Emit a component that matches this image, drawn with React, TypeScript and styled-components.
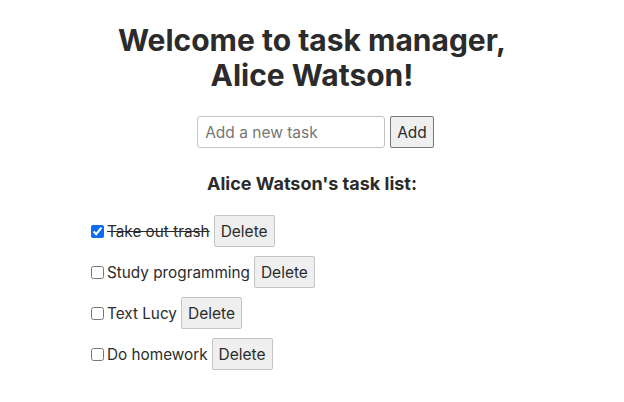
import React, { useState } from 'react';
import styled, { createGlobalStyle } from 'styled-components';

const GlobalStyle = createGlobalStyle`
  body {
    margin: 0;
    background: #ffffff;
    color: #2b2b2b;
    font-family: Inter, "Noto Sans", "Liberation Sans", sans-serif;
  }
`;

const Page = styled.div`
  width: 442px;
  margin: 0 auto;
  padding-top: 23px;
`;

const Title = styled.h1`
  margin: 0 0 23px;
  text-align: center;
  font-size: 30px;
  line-height: 35px;
  font-weight: 700;
`;

const AddForm = styled.form`
  display: flex;
  justify-content: center;
  gap: 5px;
  padding-left: 7px;
`;

const TaskInput = styled.input`
  width: 188px;
  height: 32px;
  box-sizing: border-box;
  padding: 0 7px;
  border: 1px solid #c4c4c4;
  border-radius: 3px;
  font-family: inherit;
  font-size: 15.5px;
  color: #2b2b2b;

  &::placeholder {
    color: #767676;
  }
`;

const Button = styled.button<{ $dark?: boolean }>`
  height: 32px;
  box-sizing: border-box;
  padding: 0 6px;
  background: #efefef;
  border: 1px solid ${p => (p.$dark ? '#767676' : '#c4c4c4')};
  border-radius: 2px;
  font-family: inherit;
  font-size: 15.5px;
  color: #2b2b2b;
`;

const ListTitle = styled.h2`
  margin: 25px 0 21px;
  text-align: center;
  font-size: 18px;
  font-weight: 700;
`;

const TaskList = styled.ul`
  list-style: none;
  margin: 0;
  padding: 0;
  display: flex;
  flex-direction: column;
  gap: 9px;
`;

const TaskRow = styled.li`
  display: flex;
  align-items: center;
  height: 32px;
`;

const Check = styled.input`
  width: 13px;
  height: 13px;
  margin: 0 3px 0 0;
  accent-color: #0b6cf0;
`;

const TaskText = styled.span<{ $done: boolean }>`
  font-size: 15.3px;
  margin-right: 4px;
  text-decoration: ${p => (p.$done ? 'line-through' : 'none')};
`;

const initialTasks = [
  { id: 1, text: 'Take out trash', done: true },
  { id: 2, text: 'Study programming', done: false },
  { id: 3, text: 'Text Lucy', done: false },
  { id: 4, text: 'Do homework', done: false },
];

export default function App() {
  const [tasks, setTasks] = useState(initialTasks);
  const [draft, setDraft] = useState('');

  const addTask = (e: React.FormEvent) => {
    e.preventDefault();
    if (!draft.trim()) return;
    setTasks([...tasks, { id: Date.now(), text: draft.trim(), done: false }]);
    setDraft('');
  };

  return (
    <>
      <GlobalStyle />
      <Page>
        <Title>
          Welcome to task manager,
          <br />
          Alice Watson!
        </Title>
        <AddForm onSubmit={addTask}>
          <TaskInput
            placeholder="Add a new task"
            value={draft}
            onChange={e => setDraft(e.target.value)}
          />
          <Button type="submit" $dark>Add</Button>
        </AddForm>
        <ListTitle>Alice Watson's task list:</ListTitle>
        <TaskList>
          {tasks.map(task => (
            <TaskRow key={task.id}>
              <Check
                type="checkbox"
                checked={task.done}
                onChange={() =>
                  setTasks(tasks.map(t => (t.id === task.id ? { ...t, done: !t.done } : t)))
                }
              />
              <TaskText $done={task.done}>{task.text}</TaskText>
              <Button type="button" onClick={() => setTasks(tasks.filter(t => t.id !== task.id))}>
                Delete
              </Button>
            </TaskRow>
          ))}
        </TaskList>
      </Page>
    </>
  );
}
